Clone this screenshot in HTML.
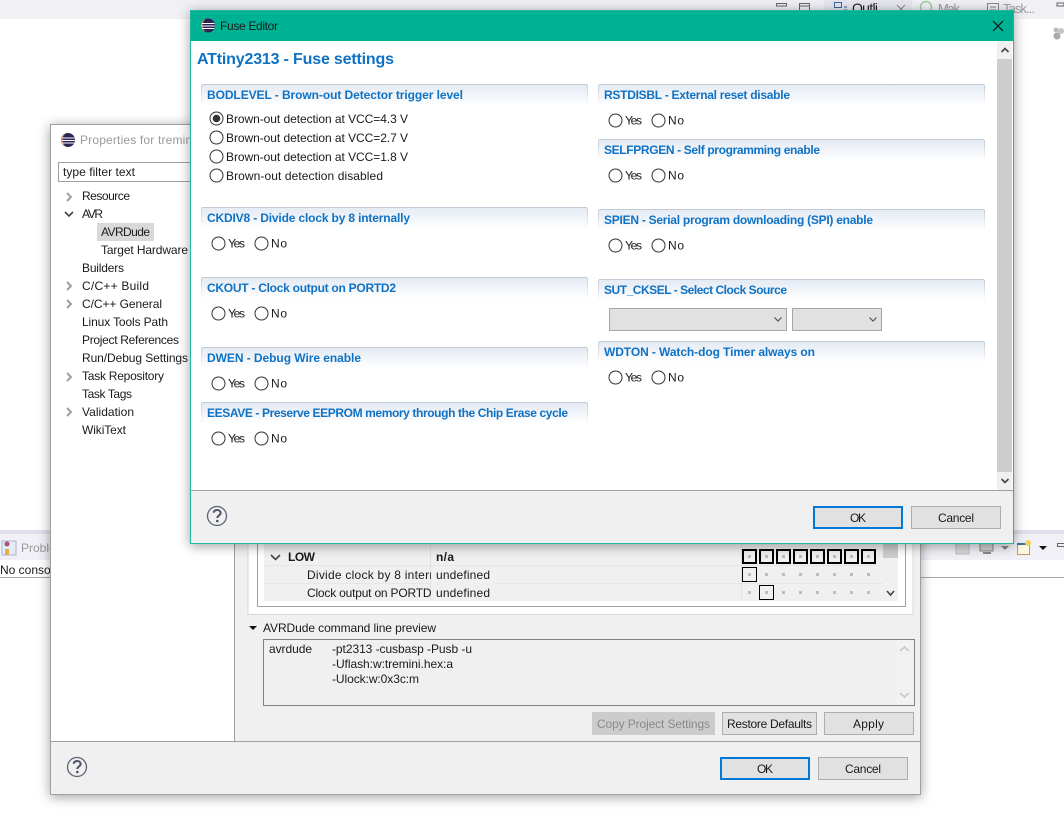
<!DOCTYPE html>
<html><head><meta charset="utf-8"><title>Fuse Editor</title>
<style>
html,body{margin:0;padding:0;background:#fff;width:1064px;height:826px;overflow:hidden}
svg{display:block}
text{font-family:"Liberation Sans",sans-serif;font-size:12px;fill:#1a1a1a;white-space:pre}
.h{font-weight:bold;fill:#0f72c4}
.b{font-weight:bold}
.g{fill:#9a9a9a}
.r{fill:#fff;stroke:#333;stroke-width:1}
.c{fill:none;stroke:#a0a0a0;stroke-width:2}
.k{fill:none;stroke:#444;stroke-width:1.6}
.d{fill:#bdbdbd}
.bb{fill:none;stroke:#000;stroke-width:2}
.tb{fill:none;stroke:#000;stroke-width:1}
.btn{fill:#e1e1e1;stroke:#adadad;stroke-width:1}
.ok{fill:#e1e1e1;stroke:#0078d7;stroke-width:2}
</style></head><body>
<svg width="1064" height="826" viewBox="0 0 1064 826" xmlns="http://www.w3.org/2000/svg">
<defs>
<linearGradient id="hg" x1="0" y1="0" x2="0" y2="1"><stop offset="0" stop-color="#e3eaf3"/><stop offset="1" stop-color="#ffffff"/></linearGradient>
<linearGradient id="sg" x1="0" y1="0" x2="0" y2="1"><stop offset="0" stop-color="#c4ccd6"/><stop offset="1" stop-color="#ffffff"/></linearGradient>
<filter id="sh" x="-5%" y="-5%" width="110%" height="110%"><feDropShadow dx="0" dy="2" stdDeviation="6" flood-color="#000" flood-opacity=".38"/></filter>
<g id="ecl"><circle cx="0" cy="0" r="7" fill="#2c2255"/><path d="M-7 0A7 7 0 0 1-2-6.7A8 8 0 0 0-2 6.7A7 7 0 0 1-7 0Z" fill="#e0964a"/><path d="M-6-2H6.500M-6.500 0.500H6.800M-6 3H6.300" stroke="#fff" stroke-width="1.100"/></g>
<g id="hlp"><circle cx="0" cy="0" r="9.500" fill="#f0f0f0" stroke="#5e6478" stroke-width="1.300"/><path d="M-3.300-3.200C-3.300-7 3.600-7 3.600-3C3.600-.4 .3-.6 .3 2" fill="none" stroke="#4d5268" stroke-width="2"/><circle cx=".3" cy="5" r="1.300" fill="#4d5268"/></g>
<g id="yn"><circle class="r" cx="6.500" cy="0" r="6.500"/><text x="16" y="4" textLength="17">Yes</text><circle class="r" cx="49.500" cy="0" r="6.500"/><text x="59" y="4" textLength="16">No</text></g>
<g id="cr"><path class="c" d="M-2-4L2 0L-2 4"/></g>
</defs>

<!-- Background workbench -->
<rect x="0" y="0" width="1064" height="19" fill="#f0f0f5"/>
<rect x="824" y="0" width="88" height="19" fill="#e6e6ef"/>
<path d="M776.500 3.500H786.500V6H776.500ZM799.500 3.500H809.500V14H799.500ZM799.500 6H809.500" fill="none" stroke="#666"/>
<path d="M834.500 2.500H841.500V7.500H834.500ZM844 7H847M844 10H847" fill="none" stroke="#3c66a0"/>
<text x="852" y="13" textLength="26" fill="#333" style="font-size:14px">Outli</text>
<path d="M897 5L905 13M905 5L897 13" stroke="#888" fill="none"/>
<circle cx="926" cy="7" r="5.500" fill="none" stroke="#9ccf9c" stroke-width="1.500"/>
<text x="938" y="13" textLength="22" class="g" style="font-size:13px">Mak</text>
<path d="M987.500 3.500H998.500V14H987.500ZM990 7H996M990 10H996" fill="none" stroke="#888"/>
<text x="1003" y="13" textLength="32" class="g" style="font-size:13px">Task...</text>
<rect x="1057" y="3" width="7" height="3" fill="none" stroke="#666"/>
<circle cx="1057" cy="36" r="3.500" fill="#aaa"/><circle cx="1061" cy="31" r="3" fill="#c4c4c4"/><circle cx="1056" cy="30" r="2.500" fill="#bbb"/>

<rect x="0" y="530" width="1064" height="30" fill="#f0f0f6"/>
<rect x="0" y="530" width="1064" height="4" fill="#dfdfea"/>
<rect x="0" y="577" width="1064" height="1" fill="#a8a8a8"/>
<rect x="2" y="541" width="14" height="14" fill="#e4ecf6" stroke="#a8b8d0"/>
<circle cx="7" cy="544" r="2.500" fill="#b05080"/><rect x="5" y="549" width="4" height="6" fill="#e0b050"/>
<text x="21" y="552" class="g">Problems</text>
<text x="0" y="574" fill="#000">No console</text>
<rect x="956" y="542" width="13" height="12" fill="#d8d8d8" stroke="#bbb"/>
<rect x="980" y="542" width="13" height="9" fill="#d0d0d0" stroke="#888"/><rect x="983" y="552" width="8" height="2" fill="#888"/>
<path d="M1001 546H1009L1005 550Z" fill="#888"/>
<rect x="1017.500" y="543.500" width="12" height="11" fill="#fff8e0" stroke="#b0a070"/><rect x="1017" y="543" width="13" height="2" fill="#3c6ea0"/>
<circle cx="1028" cy="543" r="3" fill="#f0d060"/>
<path d="M1039 546H1047L1043 550Z" fill="#111"/>
<rect x="1057.500" y="543.500" width="7" height="3" fill="none" stroke="#666"/>

<!-- Properties dialog -->
<g filter="url(#sh)"><rect x="50" y="124" width="871" height="671" fill="#fff"/></g>
<rect x="235" y="124" width="686" height="617" fill="#f0f0f0"/>
<rect x="50" y="741" width="871" height="54" fill="#f0f0f0"/>
<path d="M50.500 124.500H920.500V794.500H50.500Z" fill="none" stroke="#a0a0a0"/>
<path d="M234.500 124V741M50 741.500H921" fill="none" stroke="#a0a0a0"/>
<use href="#ecl" x="68" y="140"/>
<text x="80" y="144" textLength="115" class="g">Properties for tremini</text>
<rect x="58.500" y="162.500" width="175" height="19" fill="#fff" stroke="#a0a0a0"/>
<text x="63" y="176" textLength="72" fill="#666">type filter text</text>
<rect x="97" y="223" width="57" height="18" fill="#d9d9d9"/>
<use href="#cr" x="69" y="197"/><path class="k" d="M65 212L69 216L73 212"/>
<use href="#cr" x="69" y="286"/><use href="#cr" x="69" y="304"/><use href="#cr" x="69" y="377"/><use href="#cr" x="69" y="412"/>
<text x="82" y="200" textLength="48">Resource</text>
<text x="82" y="218" textLength="21">AVR</text>
<text x="101" y="236" textLength="49">AVRDude</text>
<text x="101" y="254" textLength="87">Target Hardware</text>
<text x="82" y="272" textLength="42">Builders</text>
<text x="82" y="290" textLength="67">C/C++ Build</text>
<text x="82" y="308" textLength="80">C/C++ General</text>
<text x="82" y="326" textLength="86">Linux Tools Path</text>
<text x="82" y="344" textLength="97">Project References</text>
<text x="82" y="362" textLength="106">Run/Debug Settings</text>
<text x="82" y="380" textLength="82">Task Repository</text>
<text x="82" y="398" textLength="50">Task Tags</text>
<text x="82" y="416" textLength="52">Validation</text>
<text x="82" y="434" textLength="44">WikiText</text>

<rect x="248" y="530" width="665" height="85" fill="#fff"/>
<path d="M248 530V614.500H913V530" fill="none" stroke="#d8d8d8"/>
<path d="M257.500 530V606.500H905.500V530" fill="none" stroke="#a0a0a0"/>
<rect x="264" y="530" width="634" height="71" fill="#f0f0f0"/>
<path d="M264 565.500H883M264 583.500H883" stroke="#e6e6e6"/>
<path d="M430.500 530V601M741.500 530V601" stroke="#e2e2e2"/>
<rect x="883" y="530" width="15" height="71" fill="#f0f0f0"/>
<rect x="883" y="530" width="15" height="28" fill="#cdcdcd"/>
<path class="k" d="M271 555L275.500 559.500L280 555" stroke="#777"/>
<text x="288" y="561" textLength="27" class="b">LOW</text>
<text x="436" y="561" textLength="18" class="b">n/a</text>
<text x="307" y="579" textLength="148">Divide clock by 8 internally</text>
<text x="307" y="597" textLength="131">Clock output on PORTD2</text>
<rect x="431" y="566" width="5" height="35" fill="#f0f0f0"/>
<rect x="436" y="566" width="60" height="35" fill="#f0f0f0"/>
<text x="436" y="579" textLength="54">undefined</text>
<text x="436" y="597" textLength="54">undefined</text>
<path class="bb" d="M743 550H756V563H743ZM760 550H773V563H760ZM777 550H790V563H777ZM794 550H807V563H794ZM811 550H824V563H811ZM828 550H841V563H828ZM845 550H858V563H845ZM862 550H875V563H862Z"/>
<rect class="tb" x="742.500" y="567.500" width="14" height="14"/>
<rect class="tb" x="759.500" y="585.500" width="14" height="14"/>
<g class="d">
<rect x="748" y="555" width="3" height="3"/><rect x="765" y="555" width="3" height="3"/><rect x="782" y="555" width="3" height="3"/><rect x="799" y="555" width="3" height="3"/><rect x="816" y="555" width="3" height="3"/><rect x="833" y="555" width="3" height="3"/><rect x="850" y="555" width="3" height="3"/><rect x="867" y="555" width="3" height="3"/>
<rect x="748" y="573" width="3" height="3"/><rect x="765" y="573" width="3" height="3"/><rect x="782" y="573" width="3" height="3"/><rect x="799" y="573" width="3" height="3"/><rect x="816" y="573" width="3" height="3"/><rect x="833" y="573" width="3" height="3"/><rect x="850" y="573" width="3" height="3"/><rect x="867" y="573" width="3" height="3"/>
<rect x="748" y="591" width="3" height="3"/><rect x="765" y="591" width="3" height="3"/><rect x="782" y="591" width="3" height="3"/><rect x="799" y="591" width="3" height="3"/><rect x="816" y="591" width="3" height="3"/><rect x="833" y="591" width="3" height="3"/><rect x="850" y="591" width="3" height="3"/><rect x="867" y="591" width="3" height="3"/>
</g>
<path class="k" d="M887 591L890.500 595L894 591"/>
<path d="M249 626H257L253 630Z" fill="#111"/>
<text x="263" y="632" textLength="173">AVRDude command line preview</text>
<rect x="263.500" y="639.500" width="651" height="66" fill="#f0f0f0" stroke="#808080"/>
<rect x="897" y="640" width="17" height="65" fill="#f2f2f2"/>
<path d="M900 651L904.500 647L909 651M900 693L904.500 697L909 693" fill="none" stroke="#c8c8c8" stroke-width="1.600"/>
<text x="269" y="653" textLength="43">avrdude</text>
<text x="332" y="653" textLength="140">-pt2313 -cusbasp -Pusb -u</text>
<text x="332" y="668" textLength="121">-Uflash:w:tremini.hex:a</text>
<text x="332" y="683" textLength="87">-Ulock:w:0x3c:m</text>
<rect x="592" y="712" width="123" height="23" fill="#cccccc"/>
<text x="597" y="728" textLength="113" class="g" style="fill:#8a8a8a">Copy Project Settings</text>
<rect class="btn" x="722.500" y="712.500" width="94" height="22"/>
<text x="727" y="728" textLength="85">Restore Defaults</text>
<rect class="btn" x="824.500" y="712.500" width="89" height="22"/>
<text x="853" y="728" textLength="31">Apply</text>
<use href="#hlp" x="77" y="767"/>
<rect class="ok" x="721" y="758" width="88" height="21"/>
<text x="757" y="773" textLength="16">OK</text>
<rect class="btn" x="818.500" y="757.500" width="89" height="22"/>
<text x="845" y="773" textLength="36">Cancel</text>

<!-- Fuse editor -->
<g filter="url(#sh)"><rect x="190" y="10" width="824" height="534" fill="#fff"/></g>
<rect x="190" y="10" width="824" height="31" fill="#00b294"/>
<rect x="191" y="491" width="822" height="52" fill="#f0f0f0"/>
<path d="M190.500 10.500H1013.500V543.500H190.500Z" fill="none" stroke="#1fb7a0"/>
<rect x="191" y="490" width="822" height="1" fill="#a0a0a0"/>
<use href="#ecl" x="208" y="25.500"/>
<text x="220" y="30" textLength="58" fill="#222">Fuse Editor</text>
<path d="M993 21L1003 31M1003 21L993 31" stroke="#111" stroke-width="1.200"/>
<rect x="997" y="41" width="15" height="449" fill="#f0f0f0"/>
<rect x="997" y="59" width="15" height="413" fill="#cdcdcd"/>
<path class="k" d="M1001.500 52L1005 48.500L1008.500 52M1001.500 479L1005 482.500L1008.500 479"/>
<text x="197" y="64" textLength="197" class="h" style="font-size:16px">ATtiny2313 - Fuse settings</text>

<!-- section headers -->
<g fill="url(#hg)">
<rect x="201" y="84" width="387" height="22" rx="2"/><rect x="201" y="207" width="387" height="22" rx="2"/><rect x="201" y="277" width="387" height="22" rx="2"/><rect x="201" y="347" width="387" height="22" rx="2"/><rect x="201" y="402" width="387" height="22" rx="2"/>
<rect x="598" y="84" width="387" height="22" rx="2"/><rect x="598" y="139" width="387" height="22" rx="2"/><rect x="598" y="209" width="387" height="22" rx="2"/><rect x="598" y="279" width="387" height="22" rx="2"/><rect x="598" y="341" width="387" height="22" rx="2"/>
</g>
<g fill="#c2cad4">
<rect x="202" y="84" width="385" height="1"/><rect x="202" y="207" width="385" height="1"/><rect x="202" y="277" width="385" height="1"/><rect x="202" y="347" width="385" height="1"/><rect x="202" y="402" width="385" height="1"/>
<rect x="599" y="84" width="385" height="1"/><rect x="599" y="139" width="385" height="1"/><rect x="599" y="209" width="385" height="1"/><rect x="599" y="279" width="385" height="1"/><rect x="599" y="341" width="385" height="1"/>
</g>
<g fill="url(#sg)">
<rect x="201" y="85" width="1" height="21"/><rect x="587" y="85" width="1" height="21"/><rect x="201" y="208" width="1" height="21"/><rect x="587" y="208" width="1" height="21"/><rect x="201" y="278" width="1" height="21"/><rect x="587" y="278" width="1" height="21"/><rect x="201" y="348" width="1" height="21"/><rect x="587" y="348" width="1" height="21"/><rect x="201" y="403" width="1" height="21"/><rect x="587" y="403" width="1" height="21"/>
<rect x="598" y="85" width="1" height="21"/><rect x="984" y="85" width="1" height="21"/><rect x="598" y="140" width="1" height="21"/><rect x="984" y="140" width="1" height="21"/><rect x="598" y="210" width="1" height="21"/><rect x="984" y="210" width="1" height="21"/><rect x="598" y="280" width="1" height="21"/><rect x="984" y="280" width="1" height="21"/><rect x="598" y="342" width="1" height="21"/><rect x="984" y="342" width="1" height="21"/>
</g>
<text class="h" x="207" y="99" textLength="256">BODLEVEL - Brown-out Detector trigger level</text>
<text class="h" x="207" y="222" textLength="203">CKDIV8 - Divide clock by 8 internally</text>
<text class="h" x="207" y="292" textLength="189">CKOUT - Clock output on PORTD2</text>
<text class="h" x="207" y="362" textLength="154">DWEN - Debug Wire enable</text>
<text class="h" x="207" y="417" textLength="361">EESAVE - Preserve EEPROM memory through the Chip Erase cycle</text>
<text class="h" x="604" y="99" textLength="186">RSTDISBL - External reset disable</text>
<text class="h" x="604" y="154" textLength="216">SELFPRGEN - Self programming enable</text>
<text class="h" x="604" y="224" textLength="269">SPIEN - Serial program downloading (SPI) enable</text>
<text class="h" x="604" y="294" textLength="183">SUT_CKSEL - Select Clock Source</text>
<text class="h" x="604" y="356" textLength="211">WDTON - Watch-dog Timer always on</text>

<circle class="r" cx="216.500" cy="118.500" r="6.500"/><circle cx="216.500" cy="118.500" r="3.800" fill="#333"/>
<circle class="r" cx="216.500" cy="137.500" r="6.500"/>
<circle class="r" cx="216.500" cy="156.500" r="6.500"/>
<circle class="r" cx="216.500" cy="175.500" r="6.500"/>
<text x="226" y="123" textLength="182">Brown-out detection at VCC=4.3 V</text>
<text x="226" y="142" textLength="182">Brown-out detection at VCC=2.7 V</text>
<text x="226" y="161" textLength="182">Brown-out detection at VCC=1.8 V</text>
<text x="226" y="180" textLength="157">Brown-out detection disabled</text>

<use href="#yn" x="212" y="243.500"/>
<use href="#yn" x="212" y="313.500"/>
<use href="#yn" x="212" y="383.500"/>
<use href="#yn" x="212" y="438.500"/>
<use href="#yn" x="609" y="120.500"/>
<use href="#yn" x="609" y="175.500"/>
<use href="#yn" x="609" y="245.500"/>
<use href="#yn" x="609" y="377.500"/>

<rect x="609.500" y="308.500" width="177" height="22" fill="#e1e1e1" stroke="#a6a6a6"/>
<rect x="792.500" y="308.500" width="89" height="22" fill="#e1e1e1" stroke="#a6a6a6"/>
<path d="M774.500 317.500L778 321L781.500 317.500M869.500 317.500L873 321L876.500 317.500" fill="none" stroke="#555" stroke-width="1.200"/>

<use href="#hlp" x="217" y="516"/>
<rect class="ok" x="814" y="507" width="88" height="21"/>
<text x="850" y="522" textLength="16" fill="#000">OK</text>
<rect class="btn" x="911.500" y="506.500" width="89" height="22"/>
<text x="938" y="522" textLength="36">Cancel</text>
</svg>
</body></html>
